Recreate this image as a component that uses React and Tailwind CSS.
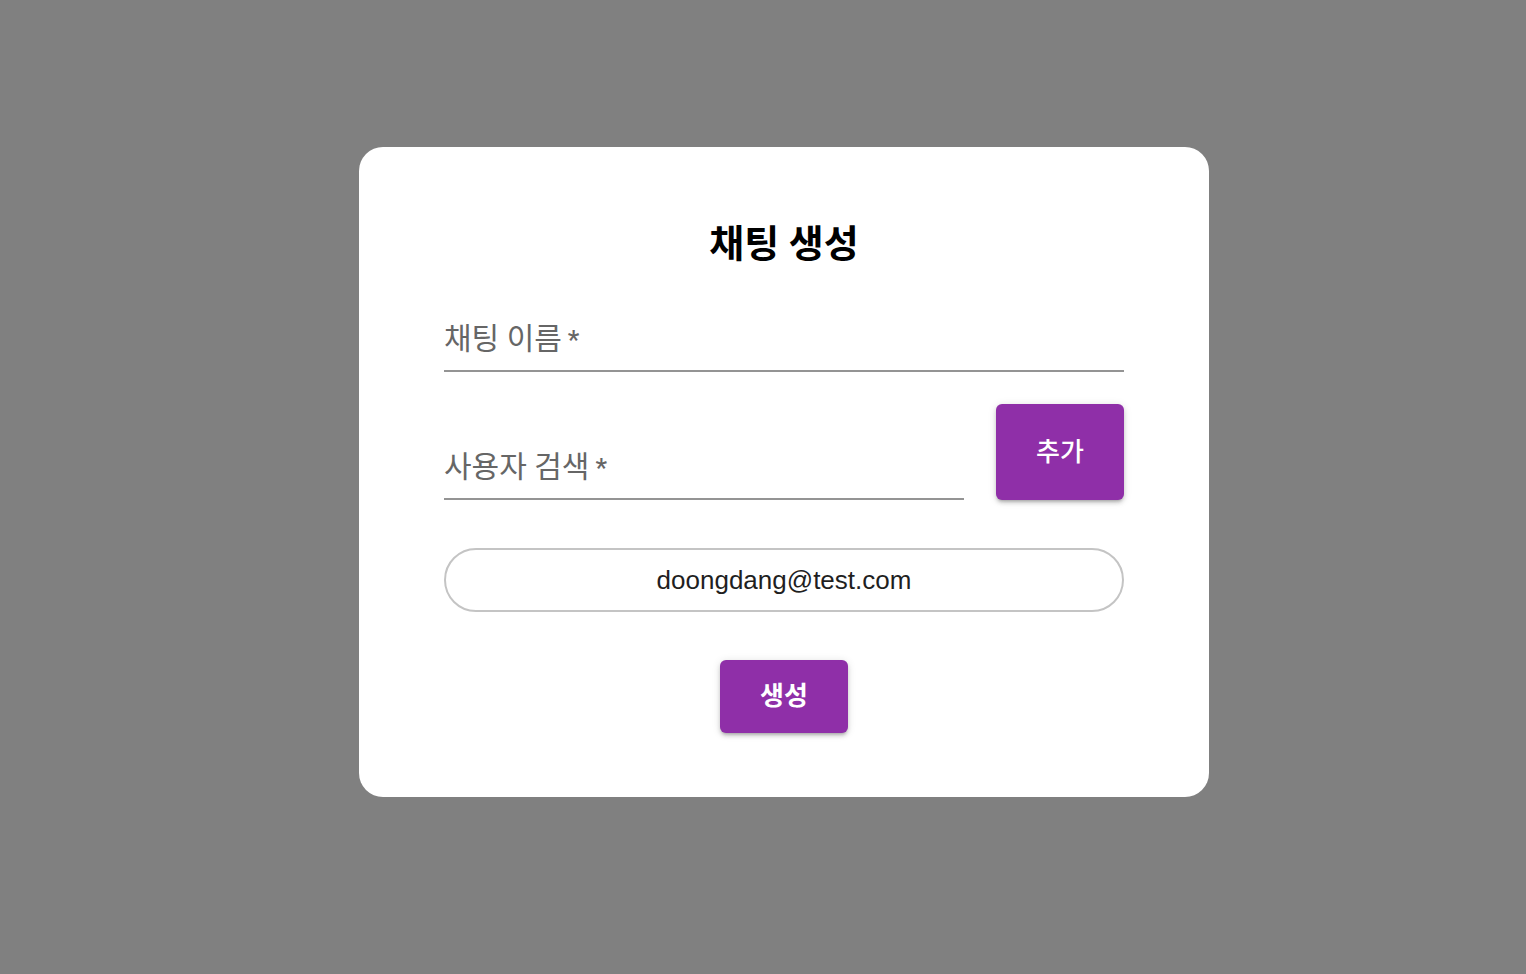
const KR = { fontFamily: 'Roboto, "Noto Sans CJK KR", sans-serif' };

function Field({ label, className = '' }) {
  return (
    <div className={`flex h-[72px] items-end border-b-2 border-[#949494] pb-[10px] ${className}`}>
      <span className="text-[30px] leading-[40px] text-[#666666]">
        {label}<span className="ml-[6px] text-[26px] font-medium">*</span>
      </span>
    </div>
  );
}

export default function App() {
  return (
    <div className="min-h-[974px] w-full bg-[#808080] pl-[359px] pt-[147px]" style={KR}>
      <div className="flex h-[650px] w-[850px] flex-col rounded-[24px] bg-white px-[85px] pt-[67px]">
        <h1 className="h-[60px] text-center text-[38px] font-bold leading-[60px] text-black">채팅 생성</h1>

        <Field label="채팅 이름" className="mt-[26px]" />

        <div className="mt-[32px] flex items-end gap-[32px]">
          <Field label="사용자 검색" className="flex-1" />
          <button className="h-[96px] w-[128px] rounded-[6px] bg-[#8f2fa8] text-[26px] font-medium text-white shadow-[0_3px_3px_-2px_rgba(0,0,0,0.2),0_3px_4px_0_rgba(0,0,0,0.14),0_1px_8px_0_rgba(0,0,0,0.12)]">
            추가
          </button>
        </div>

        <div
          className="mt-[48px] flex h-[64px] items-center justify-center rounded-full border-2 border-[#c4c4c4] text-[26px] text-[#1f1f1f]"
          style={{ fontFamily: '"Liberation Sans", Arial, sans-serif' }}
        >
          doongdang@test.com
        </div>

        <div className="mt-[48px] flex justify-center">
          <button className="h-[73px] w-[128px] rounded-[6px] bg-[#8f2fa8] text-[26px] font-bold text-white shadow-[0_3px_3px_-2px_rgba(0,0,0,0.2),0_3px_4px_0_rgba(0,0,0,0.14),0_1px_8px_0_rgba(0,0,0,0.12)]">
            생성
          </button>
        </div>
      </div>
    </div>
  );
}
